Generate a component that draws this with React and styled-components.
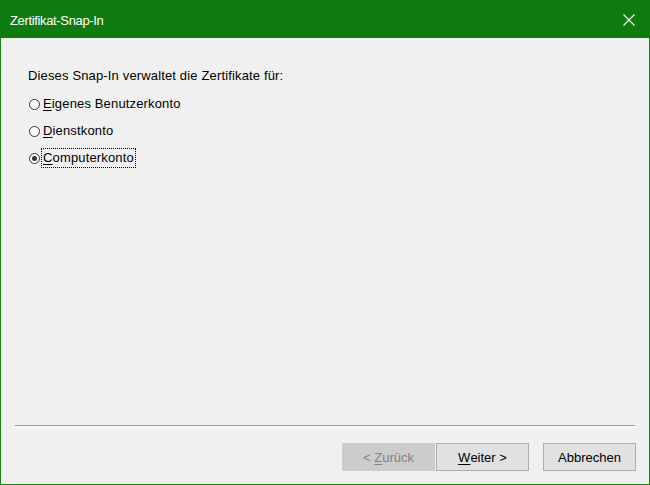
import React from "react";
import styled, { createGlobalStyle } from "styled-components";

const Global = createGlobalStyle`
  html, body { margin: 0; padding: 0; background: #f0f0f0; }
  #root { width: 650px; height: 485px; }
`;

const Window = styled.div`
  width: 650px;
  height: 485px;
  box-sizing: border-box;
  border: 1px solid #1a841a;
  border-top: none;
  background: #f0f0f0;
  display: flex;
  flex-direction: column;
  font-family: "Liberation Sans", Arial, sans-serif;
  color: #000;
`;

const TitleBar = styled.div`
  height: 38px;
  margin: 0 -1px;
  background: #107c10;
  display: flex;
  align-items: center;
  justify-content: space-between;
  padding: 0 15px 0 10px;
  flex-shrink: 0;
`;

const Title = styled.span`
  color: #fff;
  font-size: 13px;
  letter-spacing: -0.35px;
  margin-top: 2px;
`;

const CloseIcon = styled.svg`
  width: 12px;
  height: 12px;
  display: block;
  margin-top: 2px;
`;

const Content = styled.div`
  flex: 1;
  display: flex;
  flex-direction: column;
  padding: 30px 27px 0 27px;
`;

const Intro = styled.div`
  font-size: 13px;
  letter-spacing: 0.15px;
  line-height: 15px;
  margin-bottom: 12px;
`;

const RadioList = styled.div`
  display: flex;
  flex-direction: column;
  gap: 9px;
`;

const RadioRow = styled.label`
  display: flex;
  align-items: center;
  height: 18px;
  font-size: 13px;
  letter-spacing: 0.15px;
`;

const RadioCircle = styled.span`
  width: 9px;
  height: 9px;
  border: 1px solid #333;
  border-radius: 50%;
  background: #fff;
  margin-left: 1px;
  margin-right: 1px;
  display: flex;
  align-items: center;
  justify-content: center;
  box-sizing: content-box;
`;

const Dot = styled.span`
  width: 5px;
  height: 5px;
  border-radius: 50%;
  background: #333;
`;

const Label = styled.span`
  padding: 1px 1px 2px 1px;
  border: 1px dotted ${(p) => (p.$focus ? "#000" : "transparent")};
  line-height: 15px;
`;

const Key = styled.span`
  text-decoration: underline;
  text-underline-offset: 2px;
`;

const Spacer = styled.div`
  flex: 1;
`;

const Separator = styled.div`
  margin: 0 -13px 0 -13px;
  height: 1px;
  border-top: 1px solid #a0a0a0;
  border-bottom: 1px solid #fbfbfb;
`;

const ButtonBar = styled.div`
  display: flex;
  justify-content: flex-end;
  align-items: center;
  padding: 15px 0 13px;
  margin-right: -14px;
`;

const Button = styled.div`
  width: 93px;
  height: 28px;
  box-sizing: border-box;
  display: flex;
  align-items: center;
  justify-content: center;
  font-size: 13px;
  background: ${(p) => (p.$disabled ? "#cccccc" : "#e1e1e1")};
  border: 1px solid ${(p) => (p.$disabled ? "#cccccc" : "#adadad")};
  color: ${(p) => (p.$disabled ? "#838383" : "#000")};
  margin-left: ${(p) => p.$gap || 0}px;
`;

export default function App() {
  return (
    <>
      <Global />
      <Window>
        <TitleBar>
          <Title>Zertifikat-Snap-In</Title>
          <CloseIcon viewBox="0 0 12 12">
            <path d="M0.5 0.5 L11.5 11.5 M11.5 0.5 L0.5 11.5" stroke="#fff" strokeWidth="1.1" />
          </CloseIcon>
        </TitleBar>
        <Content>
          <Intro>Dieses Snap-In verwaltet die Zertifikate für:</Intro>
          <RadioList>
            <RadioRow>
              <RadioCircle />
              <Label>
                <Key>E</Key>igenes Benutzerkonto
              </Label>
            </RadioRow>
            <RadioRow>
              <RadioCircle />
              <Label>
                <Key>D</Key>ienstkonto
              </Label>
            </RadioRow>
            <RadioRow>
              <RadioCircle>
                <Dot />
              </RadioCircle>
              <Label $focus>
                <Key>C</Key>omputerkonto
              </Label>
            </RadioRow>
          </RadioList>
          <Spacer />
          <Separator />
          <ButtonBar>
            <Button $disabled>
              &lt;&nbsp;<Key>Z</Key>urück
            </Button>
            <Button $gap={1}>
              <Key>W</Key>eiter &gt;
            </Button>
            <Button $gap={14}>Abbrechen</Button>
          </ButtonBar>
        </Content>
      </Window>
    </>
  );
}
